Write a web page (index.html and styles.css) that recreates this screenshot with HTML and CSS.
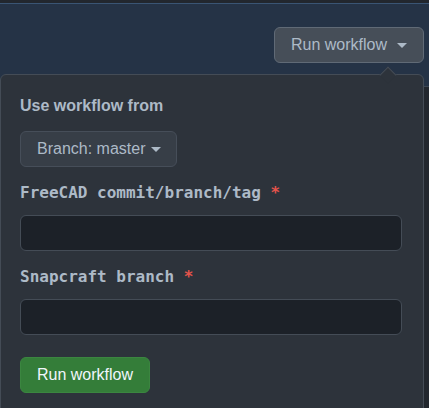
FILE: index.html
```html
<!DOCTYPE html>
<html>
<head>
<meta charset="utf-8">
<link rel="stylesheet" href="styles.css">
</head>
<body>
<div class="topstrip"></div>
<div class="header">
  <button class="btn btn-top">Run workflow <span class="caret"></span></button>
</div>
<div class="page"></div>
<div class="popover">
  <div class="arrow"></div>
  <div class="title">Use workflow from</div>
  <button class="btn btn-branch">Branch: master <span class="caret"></span></button>
  <label class="field-label">FreeCAD commit/branch/tag <span class="req">*</span></label>
  <div class="input"></div>
  <label class="field-label">Snapcraft branch <span class="req">*</span></label>
  <div class="input"></div>
  <button class="btn btn-green">Run workflow</button>
</div>
</body>
</html>
```

FILE: styles.css
```css
html, body {
  margin: 0;
  padding: 0;
}
body {
  background: #22272e;
  width: 429px;
  height: 408px;
  overflow: hidden;
  position: relative;
  font-family: "Liberation Sans", Arial, sans-serif;
  color: #adbac7;
}
.topstrip {
  height: 3px;
  background: #22272e;
  border-bottom: 1px solid #3a5574;
}
.header {
  height: 83px;
  background: #253346;
  border-bottom: 1px solid #3d4754;
  display: flex;
  justify-content: flex-end;
  align-items: flex-start;
  padding: 23px 5px 0 0;
  box-sizing: border-box;
}
.btn {
  font-family: "Liberation Sans", Arial, sans-serif;
  font-size: 16px;
  height: 36px;
  border-radius: 6px;
  padding: 0 16px;
  display: flex;
  align-items: center;
  gap: 10px;
  box-sizing: border-box;
  cursor: pointer;
  white-space: nowrap;
}
.btn-top {
  background: #464e58;
  border: 1px solid #606a76;
  color: #adbac7;
  width: 150px;
  padding-left: 16px;
}
.caret {
  width: 0;
  height: 0;
  border-left: 5px solid transparent;
  border-right: 5px solid transparent;
  border-top: 5px solid #adbac7;
  display: inline-block;
  margin-top: 1px;
}
.popover {
  position: absolute;
  left: 0;
  top: 74px;
  width: 424px;
  height: 345px;
  box-sizing: border-box;
  background: #2d333b;
  border: 1px solid #444c56;
  border-radius: 6px;
  padding: 21px 21px 0 19px;
  display: flex;
  flex-direction: column;
  align-items: flex-start;
}
.arrow {
  position: absolute;
  top: -6px;
  left: 381px;
  width: 11px;
  height: 11px;
  background: #2d333b;
  border-top: 1px solid #444c56;
  border-left: 1px solid #444c56;
  transform: rotate(45deg);
}
.title {
  font-weight: bold;
  font-size: 16px;
  line-height: 20px;
  white-space: nowrap;
}
.btn-branch {
  margin-top: 15px;
  background: #373e47;
  border: 1px solid #464e59;
  color: #adbac7;
  width: 157px;
  gap: 6px;
}
.field-label {
  margin-top: 16px;
  font-family: "DejaVu Sans Mono", "Liberation Mono", monospace;
  font-weight: bold;
  font-size: 16px;
  line-height: 20px;
  color: #adbac7;
  white-space: nowrap;
}
.req {
  color: #e5534b;
}
.input {
  margin-top: 12px;
  width: 382px;
  height: 36px;
  box-sizing: border-box;
  background: #1c2128;
  border: 1px solid #444c56;
  border-radius: 6px;
}
.btn-green {
  margin-top: 22px;
  background: #347d39;
  border: 1px solid #3b8640;
  color: #f0f6fc;
  width: 130px;
}
```
